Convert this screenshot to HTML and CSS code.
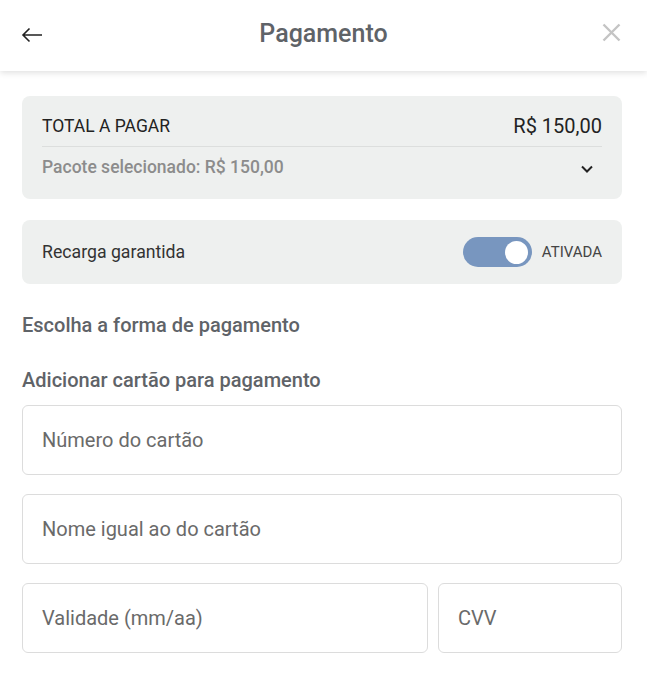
FILE: index.html
```html
<!DOCTYPE html>
<html lang="pt-BR">
<head>
<meta charset="utf-8">
<title>Pagamento</title>
<link rel="stylesheet" href="styles.css">
</head>
<body>
<header class="topbar">
  <button class="icon-btn back" aria-label="Voltar">
    <svg width="22" height="16" viewBox="0 0 22 16"><path d="M21 8H2M8.5 1.5L2 8l6.5 6.5" fill="none" stroke="#222" stroke-width="1.6"/></svg>
  </button>
  <h1 class="title">Pagamento</h1>
  <button class="icon-btn close" aria-label="Fechar">
    <svg width="19" height="19" viewBox="0 0 19 19"><path d="M1.5 1.5L17.5 17.5M17.5 1.5L1.5 17.5" fill="none" stroke="#c4c4c4" stroke-width="2.4"/></svg>
  </button>
</header>
<main class="content">
  <section class="card summary">
    <div class="row total">
      <span>TOTAL A PAGAR</span>
      <span class="amount">R$ 150,00</span>
    </div>
    <div class="row package">
      <span>Pacote selecionado: R$ 150,00</span>
      <svg width="14" height="10" viewBox="0 0 14 10"><path d="M2 2.5l5 5 5-5" fill="none" stroke="#222" stroke-width="2"/></svg>
    </div>
  </section>
  <section class="card recharge">
    <span>Recarga garantida</span>
    <div class="toggle-wrap">
      <span class="toggle"><span class="knob"></span></span>
      <span class="toggle-label">ATIVADA</span>
    </div>
  </section>
  <h2 class="section-title first">Escolha a forma de pagamento</h2>
  <h2 class="section-title">Adicionar cartão para pagamento</h2>
  <form class="fields">
    <div class="field">Número do cartão</div>
    <div class="field">Nome igual ao do cartão</div>
    <div class="field-row">
      <div class="field grow">Validade (mm/aa)</div>
      <div class="field cvv">CVV</div>
    </div>
  </form>
</main>
</body>
</html>
```
FILE: styles.css
```css
* { box-sizing: border-box; }
html, body { margin: 0; padding: 0; background: #fff; }
body { font-family: Roboto, "Noto Sans", sans-serif; color: #333; }

.topbar {
  height: 71px;
  display: flex;
  align-items: center;
  justify-content: space-between;
  padding: 0 26px 4px 21px;
  box-shadow: 0 2px 6px rgba(0,0,0,0.12);
  position: relative;
}
.icon-btn { background: none; border: 0; padding: 0; display: flex; align-items: center; cursor: pointer; }
.back { padding-top: 2px; }
.close { padding-bottom: 2px; }
.title {
  margin: 0 0 0 2px;
  font-size: 25px;
  font-weight: 500;
  color: #5f6368;
}

.content { padding: 25px 25px 0 22px; }

.card {
  background: #eef0ef;
  border-radius: 8px;
}
.summary { padding: 18px 20px 14px 20px; height: 103px; }
.row { display: flex; justify-content: space-between; align-items: center; }
.total {
  font-size: 17.5px;
  color: #222;
  padding-bottom: 8px;
  border-bottom: 1px solid #dcdedd;
}
.total .amount { font-size: 20px; font-weight: 400; color: #222; }
.package {
  font-size: 17.5px;
  font-weight: 500;
  color: #8c8c8c;
  padding: 10px 8px 0 0;
}
.package svg { margin-top: 4px; }

.recharge {
  margin-top: 21px;
  height: 64px;
  display: flex;
  align-items: center;
  justify-content: space-between;
  padding: 0 20px;
  font-size: 17.7px;
  color: #333;
}
.toggle-wrap { display: flex; align-items: center; gap: 10px; }
.toggle {
  width: 69px; height: 30px;
  background: #7896bf;
  border-radius: 15px;
  display: flex;
  align-items: center;
  justify-content: flex-end;
  padding-right: 4px;
}
.knob { width: 23px; height: 23px; border-radius: 50%; background: #fff; }
.toggle-label { font-size: 15px; color: #444; }

.section-title {
  margin: 0;
  font-size: 20px;
  font-weight: 500;
  color: #5f6368;
  line-height: 24px;
}
.section-title.first { margin-top: 29px; }
.section-title + .section-title { margin-top: 31px; }

.fields { margin-top: 13px; display: flex; flex-direction: column; gap: 19px; }
.field {
  height: 70px;
  border: 1px solid #dcdcdc;
  border-radius: 6px;
  display: flex;
  align-items: center;
  padding-left: 19px;
  font-size: 20px;
  color: #6a6a6a;
}
.field-row { display: flex; gap: 10px; }
.grow { flex: 1; }
.cvv { width: 184px; }
```
